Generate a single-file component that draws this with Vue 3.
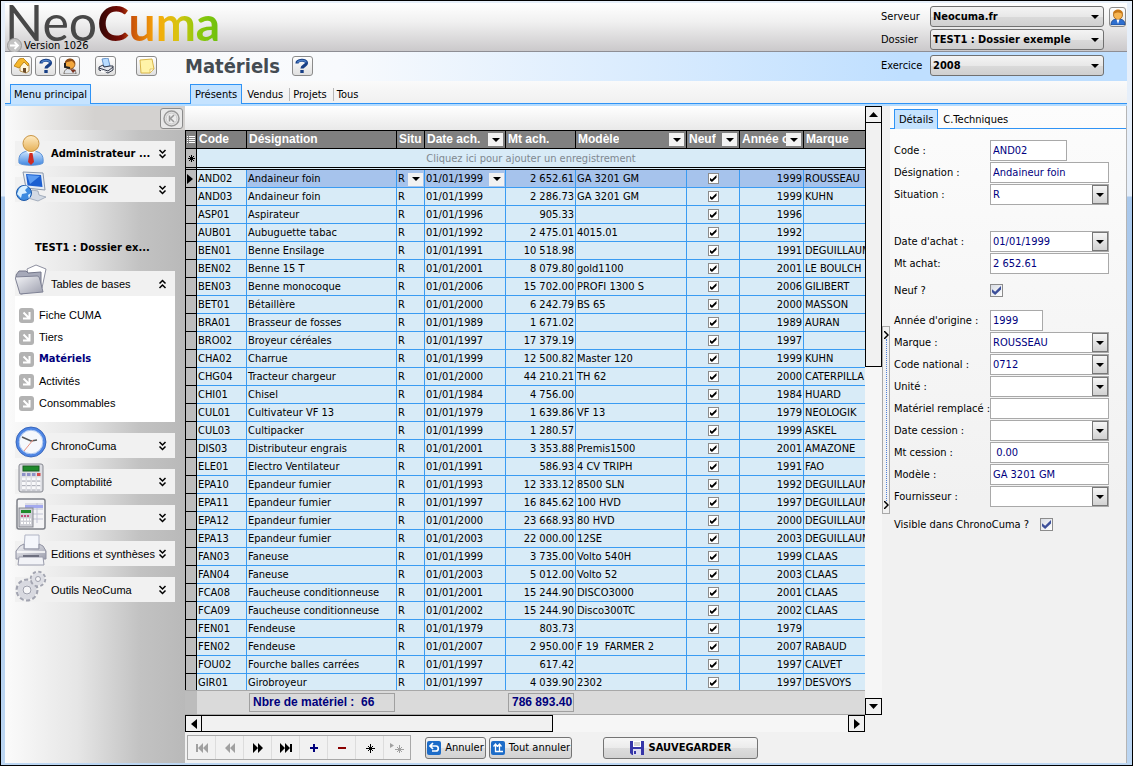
<template>
  <div class="window">
    <svg class="sprite" aria-hidden="true">
      <defs>
        <linearGradient id="blue" x1="0" y1="0" x2="0" y2="1">
          <stop offset="0" stop-color="#cfe6ff" />
          <stop offset="1" stop-color="#3f86e0" />
        </linearGradient>
        <linearGradient id="skin" x1="0" y1="0" x2="0" y2="1">
          <stop offset="0" stop-color="#ffecc4" />
          <stop offset="1" stop-color="#e6b056" />
        </linearGradient>
        <linearGradient id="steel" x1="0" y1="0" x2="1" y2="1">
          <stop offset="0" stop-color="#f4f5f8" />
          <stop offset="1" stop-color="#9c9ead" />
        </linearGradient>
      </defs>
      <symbol id="home" viewBox="0 0 16 16">
        <path d="M6 7v6l6 2 3-2V7l-4-4z" fill="#fff6dc" stroke="#a67a2c" stroke-width=".8" />
        <path d="M0 8l5-7 4-1 6 6-1 2-4-4-5 6z" fill="#f5b62c" stroke="#b27a10" stroke-width=".8" />
        <path d="M9 10h3v5l-3-1z" fill="#6a4a2a" />
      </symbol>
      <symbol id="help" viewBox="0 0 16 16">
        <path d="M3 5.500C3 1.500 12.500 1 12.500 5 12.500 8 8 7.500 8 10.500" fill="none" stroke="#173f86" stroke-width="3.200" />
        <path d="M3.500 4.500C4.500 2 11.500 1.500 12 4.500" fill="none" stroke="#4d80c8" stroke-width="1.500" />
        <rect x="6.300" y="12" width="3.400" height="3" fill="#173f86" />
      </symbol>
      <symbol id="support" viewBox="0 0 16 16">
        <path d="M2 16c0-4 3-6 6-6s6 2 6 6z" fill="#dfe4ea" stroke="#5a5148" stroke-width=".8" />
        <circle cx="8" cy="6" r="5" fill="#f2a73d" stroke="#8a4a10" stroke-width=".8" />
        <path d="M3 6C2-1 14-1 13 6l-3-3-5 1z" fill="#8a4a14" />
        <path d="M3 5v4l5 1" fill="none" stroke="#222" stroke-width="2" />
        <path d="M8 11l3 4 3-3z" fill="#7b3320" />
      </symbol>
      <symbol id="print" viewBox="0 0 16 16">
        <path d="M4 1l6-1 2 8-6 1z" fill="#b8dcff" stroke="#4d80c0" stroke-width=".8" />
        <path d="M1 9l4-2 1 2 6-1 3 0v4l-5 3-9-3z" fill="#e4e6ec" stroke="#333a4a" />
        <path d="M1 10l9 3 5-4" fill="none" stroke="#333a4a" />
        <path d="M3 12l6 2-2 1-4-1z" fill="#fff" />
      </symbol>
      <symbol id="note" viewBox="0 0 16 16">
        <path d="M1 2l12-1 2 10-4 4-9 0z" fill="#fff3a8" stroke="#d9b64a" />
        <path d="M11 15v-4h4z" fill="#fffbe0" stroke="#d9b64a" stroke-width=".7" />
      </symbol>
      <symbol id="account" viewBox="0 0 16 16">
        <path d="M1 16c0-5 3-6 7-6s7 1 7 6z" fill="#2e6fd0" stroke="#1b468c" stroke-width=".8" />
        <circle cx="8" cy="6" r="4.500" fill="#f7b552" stroke="#9a5a10" stroke-width=".8" />
        <path d="M3 5C3-1 13-1 13 5c-3-2-6-2-10 0z" fill="#c77818" />
        <path d="M6.500 10.500h3L8 15z" fill="#fff" />
      </symbol>
      <symbol id="user" viewBox="0 0 32 32">
        <path d="M4 29c-1-9 3-12 12-12s13 3 12 12c-3 3-21 3-24 0z" fill="url(#blue)" stroke="#5c93d8" />
        <path d="M11 17l5 5 5-5" fill="#fff" />
        <path d="M14.500 19h3l1.500 9-3 3-3-3z" fill="#cf2a22" />
        <circle cx="16" cy="9.500" r="8" fill="url(#skin)" stroke="#c99545" />
      </symbol>
      <symbol id="network" viewBox="0 0 32 32">
        <path d="M8 2l20 1 2 17-19-2z" fill="#e6ecf4" stroke="#8b98ab" />
        <path d="M11 4l15 1 1.500 12-15-1.500z" fill="#1c5fd0" />
        <path d="M12 5l13 1-10 8z" fill="#5c9cf2" />
        <path d="M17 20l6 1 1 4 7 2-8 4-10-3z" fill="#d3dae4" stroke="#8b98ab" stroke-width=".7" />
        <circle cx="9" cy="23" r="7.500" fill="#3c8be0" stroke="#1d58a8" />
        <path d="M4 19c3-4 7-4 9-2l-3 3 2 3-5 1-1 4-4-4zM13 25l3-2-2 6z" fill="#d9f0ff" />
      </symbol>
      <symbol id="folder" viewBox="0 0 32 32">
        <path d="M12 5l9-4 10 4-4 19-12-3z" fill="#fff" stroke="#8e90a0" />
        <path d="M1 11l3-4 7 0 2 2 13-1v18L6 30z" fill="#a6a9b9" stroke="#74778a" />
        <path d="M0 13l22-1c2 0 2 1 3 4l3 12-23 2z" fill="url(#steel)" stroke="#7f8295" />
      </symbol>
      <symbol id="clock" viewBox="0 0 32 32">
        <circle cx="16" cy="16" r="13.500" fill="#f6f8fc" stroke="#4f86e4" stroke-width="3" />
        <circle cx="16" cy="16" r="15" fill="none" stroke="#2a58b0" stroke-width=".8" />
        <circle cx="16" cy="16" r="11.800" fill="none" stroke="#a8c4f0" />
        <path d="M7 11l9 4 6-1" fill="none" stroke="#555" stroke-width="1.500" />
        <path d="M18 14L9 25" stroke="#e89080" />
      </symbol>
      <symbol id="calculator" viewBox="0 0 32 32">
        <rect x="4" y="2" width="24" height="28" rx="2" fill="#dcdde2" stroke="#85878f" />
        <rect x="8" y="4" width="16" height="5" fill="#1f8a2b" stroke="#1b5c22" />
        <g stroke-width="3" stroke-dasharray="3.500 1.500">
          <path d="M7 12.500h14" stroke="#8f92c8" />
          <path d="M22 12.500h4" stroke="#d84a4a" />
          <path d="M7 17h19M7 21.500h19M7 26h19" stroke="#f8f8fa" />
        </g>
        <path d="M7 19h18M7 23.500h18M7 28h18" stroke="#a6a8b2" stroke-width=".8" stroke-dasharray="3.500 1.500" />
      </symbol>
      <symbol id="invoice" viewBox="0 0 32 32">
        <rect x="2" y="1" width="28" height="30" rx="2" fill="#f4f4f6" stroke="#7e8088" stroke-width="1.500" />
        <path d="M10 6h18M10 11h18M10 16h18M10 21h18M22 5v20" stroke="#c2c4d4" fill="none" />
        <path d="M10 7h18v3H10z" fill="#a2a8ee" />
        <rect x="4" y="10" width="14" height="19" fill="#cfd0d6" stroke="#85878f" />
        <rect x="6" y="12" width="10" height="3" fill="#1f8a2b" />
        <path d="M6 18h8" stroke="#c04a7a" stroke-width="2" stroke-dasharray="2 1" />
        <path d="M6 21.500h10M6 25h10" stroke="#fff" stroke-width="2" stroke-dasharray="2 1" />
      </symbol>
      <symbol id="printer" viewBox="0 0 32 32">
        <path d="M10 1h14v14H9z" fill="#f4f6fb" stroke="#b0b4c4" />
        <path d="M5 12l4-2v5h15v-5l4 2 3 5v8H1v-8z" fill="url(#steel)" stroke="#9092a2" />
        <path d="M2 18h28" stroke="#fff" stroke-width="1.500" />
        <path d="M4 23h24l1 8H3z" fill="#f2f3f7" stroke="#9a9cac" />
        <path d="M8 22h16" stroke="#6e7080" stroke-width="2" />
      </symbol>
      <symbol id="gears" viewBox="0 0 32 32">
        <circle cx="12" cy="20" r="10" fill="none" stroke="#a2a4b0" stroke-width="3" stroke-dasharray="4 2.283" />
        <circle cx="12" cy="20" r="7" fill="#f2f2f5" stroke="#d8d9e0" stroke-width="5" />
        <circle cx="12" cy="20" r="4" fill="#f6f6f8" stroke="#9d9fab" />
        <circle cx="23" cy="9" r="7" fill="none" stroke="#a2a4b0" stroke-width="2.500" stroke-dasharray="3.200 2.300" />
        <circle cx="23" cy="9" r="4.500" fill="#f2f2f5" stroke="#dddee4" stroke-width="4" />
        <circle cx="23" cy="9" r="2.500" fill="#f6f6f8" stroke="#9d9fab" />
      </symbol>
      <symbol id="arrow" viewBox="0 0 15 15">
        <rect width="15" height="15" rx="3" fill="#b3b3b3" />
        <path d="M4.500 4.500l5 5M10.500 4v6.500H4" fill="none" stroke="#fff" stroke-width="2" />
      </symbol>
      <symbol id="undo" viewBox="0 0 14 14">
        <rect width="14" height="14" rx="2" fill="#1d6cc8" />
        <path d="M3 5h6c3 0 3 5 0 5H5M6 2L3 5l3 3" fill="none" stroke="#fff" stroke-width="1.700" />
      </symbol>
      <symbol id="undo-all" viewBox="0 0 14 14">
        <rect width="14" height="14" rx="2" fill="#1d6cc8" />
        <path d="M4.500 3v7.500H12M8.500 3v7M2.500 5.500L4.500 3l2 2.500M6.500 5.500l2-2.500 2 2.500" fill="none" stroke="#fff" stroke-width="1.300" />
      </symbol>
      <symbol id="save" viewBox="0 0 14 14">
        <path d="M0 0h14v14H2l-2-2z" fill="#3636a8" />
        <path d="M3 0h8v6H3z" fill="#fff" />
        <path d="M4 2h6M4 4h6" stroke="#aaa" />
        <path d="M3 8h8v6H3z" fill="#dcdcf0" />
        <path d="M4 10h2v3H4z" fill="#3636a8" />
      </symbol>
      <symbol id="chevrons" viewBox="0 0 9 10">
        <path d="M1.500 1l3 3 3-3M1.500 5.500l3 3 3-3" fill="none" stroke="#000" stroke-width="1.500" />
      </symbol>
      <symbol id="down" viewBox="0 0 8 4">
        <path d="M0 0h8L4 4z" />
      </symbol>
      <symbol id="first" viewBox="0 0 14 10">
        <path d="M1 1h2v8H1zM8 0v10L3 5zM13 0v10L8 5z" />
      </symbol>
      <symbol id="previous" viewBox="0 0 14 10">
        <path d="M7 0v10L2 5zM12 0v10L7 5z" />
      </symbol>
      <symbol id="next" viewBox="0 0 14 10">
        <path d="M2 0l5 5-5 5zM7 0l5 5-5 5z" />
      </symbol>
      <symbol id="last" viewBox="0 0 14 10">
        <path d="M1 0l5 5-5 5zM6 0l5 5-5 5zM11 1h2v8h-2z" />
      </symbol>
      <symbol id="plus" viewBox="0 0 14 10">
        <path d="M3 4h3V1h2v3h3v2H8v3H6V6H3z" />
      </symbol>
      <symbol id="minus" viewBox="0 0 14 10">
        <path d="M3 4h8v2H3z" />
      </symbol>
      <symbol id="star" viewBox="0 0 14 10">
        <path d="M7.500 1v9M3 5.500h9M5 3l5 5M10 3L5 8" fill="none" stroke="currentColor" />
      </symbol>
      <symbol id="insert" viewBox="0 0 14 10">
        <path d="M0 0l4 2.500L0 5z" />
        <path d="M9.500 2v8M5 6.500h9M7 4l5 5M12 4L7 9" fill="none" stroke="currentColor" />
      </symbol>
    </svg>

    <header class="banner">
      <div class="brand">
        <div class="logo"><span class="logo-neo">Neo</span><span class="logo-cuma">Cuma</span></div>
        <div class="version">
          <svg width="15" height="15" viewBox="0 0 15 15">
            <circle cx="7.500" cy="7.500" r="7" fill="#c4c4c4" stroke="#999" />
            <path d="M3 7.500h8M7.500 4l3.500 3.500L7.500 11" fill="none" stroke="#fff" stroke-width="1.800" />
          </svg>
          Version 1026
        </div>
      </div>
      <div class="connection">
        <label for="server">Serveur</label>
        <div class="combo big">
          <select id="server"><option>Neocuma.fr</option></select>
          <svg class="tri"><use href="#down" /></svg>
        </div>
        <button class="tool account" aria-label="Compte"><svg><use href="#account" /></svg></button>
        <label for="folder-select">Dossier</label>
        <div class="combo big">
          <select id="folder-select"><option>TEST1 : Dossier exemple</option></select>
          <svg class="tri"><use href="#down" /></svg>
        </div>
      </div>
    </header>

    <div class="toolbar">
      <div class="tools">
        <button v-for="tool in tools" :key="tool" class="tool" :class="tool" :aria-label="tool">
          <svg><use :href="'#' + tool" /></svg>
        </button>
      </div>
      <h1>Matériels</h1>
      <button class="tool" aria-label="Aide"><svg><use href="#help" /></svg></button>
      <div class="connection year">
        <label for="year">Exercice</label>
        <div class="combo big">
          <select id="year"><option>2008</option></select>
          <svg class="tri"><use href="#down" /></svg>
        </div>
      </div>
    </div>

    <nav class="tabs">
      <div class="tab-group side"><button class="tab active">Menu principal</button></div>
      <div class="tab-group">
        <button v-for="(tab, i) in tabs" :key="tab" class="tab" :class="{ active: i === 0 }">{{ tab }}</button>
      </div>
    </nav>

    <div class="body">
      <aside class="sidebar">
        <div class="side-top">
          <button class="collapse" aria-label="Réduire">
            <svg width="17" height="17" viewBox="0 0 17 17">
              <circle cx="8.500" cy="8.500" r="7.500" fill="#ececec" stroke="#999" stroke-width="1.500" />
              <circle cx="8.500" cy="8.500" r="5.500" fill="none" stroke="#c4c4c4" />
              <path d="M6.500 5.500v6M11 5L7.500 8.500 11 12" fill="none" stroke="#999" stroke-width="1.500" />
            </svg>
          </button>
        </div>
        <div class="menu">
          <template v-for="item in menu" :key="item.label">
            <div v-if="item.title" class="menu-title">{{ item.label }}</div>
            <button v-else class="menu-head" :class="{ bold: item.bold, open: item.children }">
              <svg class="menu-icon"><use :href="'#' + item.icon" /></svg>
              <span>{{ item.label }}</span>
              <svg class="chev"><use href="#chevrons" /></svg>
            </button>
            <ul v-if="item.children" class="submenu">
              <li v-for="child in item.children" :key="child">
                <svg><use href="#arrow" /></svg>
                <a href="#" :class="{ current: child === 'Matériels' }">{{ child }}</a>
              </li>
            </ul>
          </template>
        </div>
      </aside>

      <main class="main">
        <div class="grid-area">
          <div class="grid-column">
            <div class="group-strip"></div>
            <div class="table-wrap">
              <table>
                <colgroup>
                  <col v-for="(w, i) in widths" :key="i" :class="w" />
                </colgroup>
                <thead>
                  <tr>
                    <th class="mark">
                      <svg width="8" height="10" viewBox="0 0 8 10"><path d="M0 1.500h1M2 1.500h6M0 3.500h1M2 3.500h6M0 5.500h1M2 5.500h6M0 7.500h1M2 7.500h6" stroke="#fff" /></svg>
                    </th>
                    <th v-for="col in columns" :key="col.label">
                      <div class="th-inner">
                        <span>{{ col.label }}</span>
                        <button v-if="col.filter" class="drop" aria-label="Filtrer"><svg class="tri"><use href="#down" /></svg></button>
                      </div>
                    </th>
                  </tr>
                </thead>
                <tbody>
                  <tr class="new-row">
                    <td class="mark">
                      <svg width="7" height="7" viewBox="0 0 7 7"><path d="M3.500 0v7M1 1l5 5M6 1L1 6M0 3.500h7" stroke="#000" /></svg>
                    </td>
                    <td colspan="9">Cliquez ici pour ajouter un enregistrement</td>
                  </tr>
                  <tr v-for="(row, i) in rows" :key="row[0]" :class="{ selected: i === 0 }">
                    <td class="mark"><svg v-if="i === 0" width="6" height="10" viewBox="0 0 6 10"><path d="M0 0l6 5-6 5z" /></svg></td>
                    <td>{{ row[0] }}</td>
                    <td>{{ row[1] }}</td>
                    <td>
                      <div class="cell">R<button v-if="i === 0" class="drop" aria-label="Situation"><svg class="tri"><use href="#down" /></svg></button></div>
                    </td>
                    <td>
                      <div class="cell">{{ row[2] }}<button v-if="i === 0" class="drop" aria-label="Date"><svg class="tri"><use href="#down" /></svg></button></div>
                    </td>
                    <td class="num">{{ row[3] }}</td>
                    <td>{{ row[4] }}</td>
                    <td class="check-cell"><input type="checkbox" class="check" checked :aria-label="'Neuf ' + row[0]" /></td>
                    <td class="num">{{ row[5] }}</td>
                    <td>{{ row[6] }}</td>
                  </tr>
                </tbody>
              </table>
            </div>
            <div class="summary">
              <div class="total count">Nbre de matériel :&nbsp; 66</div>
              <div class="total amount">786 893.40</div>
            </div>
            <div class="hscroll">
              <button class="scroll-btn" aria-label="Gauche"><svg width="6" height="10" viewBox="0 0 6 10"><path d="M6 0v10L0 5z" /></svg></button>
              <div class="hthumb"></div>
              <div class="htrack"></div>
              <button class="scroll-btn" aria-label="Droite"><svg width="6" height="10" viewBox="0 0 6 10"><path d="M0 0v10l6-5z" /></svg></button>
            </div>
          </div>
          <div class="vscroll">
            <button class="scroll-btn" aria-label="Haut"><svg width="9" height="5" viewBox="0 0 9 5"><path d="M0 5h9L4.500 0z" /></svg></button>
            <div class="vthumb"></div>
            <div class="vtrack"></div>
            <button class="scroll-btn" aria-label="Bas"><svg width="9" height="5" viewBox="0 0 9 5"><path d="M0 0h9L4.500 5z" /></svg></button>
          </div>
        </div>
        <div class="actions">
          <div class="navigator">
            <button v-for="n in navigator" :key="n" :class="n" :aria-label="n"><svg><use :href="'#' + n" /></svg></button>
          </div>
          <button class="action"><svg><use href="#undo" /></svg>Annuler</button>
          <button class="action all"><svg><use href="#undo-all" /></svg>Tout annuler</button>
          <button class="action save"><svg><use href="#save" /></svg>SAUVEGARDER</button>
        </div>
      </main>

      <div class="splitter">
        <button aria-label="Replier">
          <svg width="5" height="8" viewBox="0 0 5 8"><path d="M0 0l4 4-4 4" /></svg>
          <i></i>
          <svg width="5" height="8" viewBox="0 0 5 8"><path d="M0 0l4 4-4 4" /></svg>
        </button>
      </div>

      <section class="details">
        <div class="tab-group details-tabs">
          <button class="tab active">Détails</button>
          <button class="tab">C.Techniques</button>
        </div>
        <form class="form" @submit.prevent>
          <div v-for="(group, g) in fields" :key="g" class="fieldset">
            <div v-for="f in group" :key="f.label" class="field" :class="{ long: f.long }">
              <label :for="f.id">{{ f.label }}</label>
              <input v-if="f.type === 'check'" :id="f.id" type="checkbox" class="check big" checked />
              <div v-else-if="f.type === 'select'" class="combo">
                <select :id="f.id"><option>{{ f.value }}</option></select>
                <span class="combo-btn"><svg class="tri"><use href="#down" /></svg></span>
              </div>
              <input v-else :id="f.id" type="text" :class="f.size" :value="f.value" />
            </div>
          </div>
        </form>
      </section>
    </div>
  </div>
</template>

<script setup>
const tools = ['home', 'help', 'support', 'print', 'note']
const tabs = ['Présents', 'Vendus', 'Projets', 'Tous']
const navigator = ['first', 'previous', 'next', 'last', 'plus', 'minus', 'star', 'insert']

const menu = [
  { label: 'Administrateur ...', icon: 'user', bold: true },
  { label: 'NEOLOGIK', icon: 'network', bold: true },
  { label: 'TEST1 : Dossier ex...', title: true },
  {
    label: 'Tables de bases',
    icon: 'folder',
    children: ['Fiche CUMA', 'Tiers', 'Matériels', 'Activités', 'Consommables']
  },
  { label: 'ChronoCuma', icon: 'clock' },
  { label: 'Comptabilité', icon: 'calculator' },
  { label: 'Facturation', icon: 'invoice' },
  { label: 'Editions et synthèses', icon: 'printer' },
  { label: 'Outils NeoCuma', icon: 'gears' }
]

const widths = ['w-mark', 'w-code', 'w-name', 'w-situ', 'w-date', 'w-amount', 'w-model', 'w-new', 'w-year', 'w-brand']

const columns = [
  { label: 'Code' },
  { label: 'Désignation' },
  { label: 'Situ' },
  { label: 'Date ach.', filter: true },
  { label: 'Mt ach.' },
  { label: 'Modèle', filter: true },
  { label: 'Neuf', filter: true },
  { label: 'Année o', filter: true },
  { label: 'Marque' }
]

const rows = [
  ['AND02', 'Andaineur foin', '01/01/1999', '2 652.61', 'GA 3201 GM', '1999', 'ROUSSEAU'],
  ['AND03', 'Andaineur foin', '01/01/1999', '2 286.73', 'GA 3201 GM', '1999', 'KUHN'],
  ['ASP01', 'Aspirateur', '01/01/1996', '905.33', '', '1996', ''],
  ['AUB01', 'Aubuguette tabac', '01/01/1992', '2 475.01', '4015.01', '1992', ''],
  ['BEN01', 'Benne Ensilage', '01/01/1991', '10 518.98', '', '1991', 'DEGUILLAUM'],
  ['BEN02', 'Benne 15 T', '01/01/2001', '8 079.80', 'gold1100', '2001', 'LE BOULCH'],
  ['BEN03', 'Benne monocoque', '01/01/2006', '15 702.00', 'PROFI 1300 S', '2006', 'GILIBERT'],
  ['BET01', 'Bétaillère', '01/01/2000', '6 242.79', 'BS 65', '2000', 'MASSON'],
  ['BRA01', 'Brasseur de fosses', '01/01/1989', '1 671.02', '', '1989', 'AURAN'],
  ['BRO02', 'Broyeur céréales', '01/01/1997', '17 379.19', '', '1997', ''],
  ['CHA02', 'Charrue', '01/01/1999', '12 500.82', 'Master 120', '1999', 'KUHN'],
  ['CHG04', 'Tracteur chargeur', '01/01/2000', '44 210.21', 'TH 62', '2000', 'CATERPILLA'],
  ['CHI01', 'Chisel', '01/01/1984', '4 756.00', '', '1984', 'HUARD'],
  ['CUL01', 'Cultivateur VF 13', '01/01/1979', '1 639.86', 'VF 13', '1979', 'NEOLOGIK'],
  ['CUL03', 'Cultipacker', '01/01/1999', '1 280.57', '', '1999', 'ASKEL'],
  ['DIS03', 'Distributeur engrais', '01/01/2001', '3 353.88', 'Premis1500', '2001', 'AMAZONE'],
  ['ELE01', 'Electro Ventilateur', '01/01/1991', '586.93', '4 CV TRIPH', '1991', 'FAO'],
  ['EPA10', 'Epandeur fumier', '01/01/1993', '12 333.12', '8500 SLN', '1992', 'DEGUILLAUM'],
  ['EPA11', 'Epandeur fumier', '01/01/1997', '16 845.62', '100 HVD', '1997', 'DEGUILLAUM'],
  ['EPA12', 'Epandeur fumier', '01/01/2000', '23 668.93', '80 HVD', '2000', 'DEGUILLAUM'],
  ['EPA13', 'Epandeur fumier', '01/01/2003', '22 000.00', '12SE', '2003', 'DEGUILLAUM'],
  ['FAN03', 'Faneuse', '01/01/1999', '3 735.00', 'Volto 540H', '1999', 'CLAAS'],
  ['FAN04', 'Faneuse', '01/01/2003', '5 012.00', 'Volto 52', '2003', 'CLAAS'],
  ['FCA08', 'Faucheuse conditionneuse', '01/01/2001', '15 244.90', 'DISCO3000', '2001', 'CLAAS'],
  ['FCA09', 'Faucheuse conditionneuse', '01/01/2002', '15 244.90', 'Disco300TC', '2002', 'CLAAS'],
  ['FEN01', 'Fendeuse', '01/01/1979', '803.73', '', '1979', ''],
  ['FEN02', 'Fendeuse', '01/01/2007', '2 950.00', 'F 19  FARMER 2', '2007', 'RABAUD'],
  ['FOU02', 'Fourche balles carrées', '01/01/1997', '617.42', '', '1997', 'CALVET'],
  ['GIR01', 'Girobroyeur', '01/01/1997', '4 039.90', '2302', '1997', 'DESVOYS']
]

const fields = [
  [
    { id: 'code', label: 'Code :', value: 'AND02', size: 'medium' },
    { id: 'name', label: 'Désignation :', value: 'Andaineur foin' },
    { id: 'status', label: 'Situation :', value: 'R', type: 'select' }
  ],
  [
    { id: 'bought', label: "Date d'achat :", value: '01/01/1999', type: 'select' },
    { id: 'price', label: 'Mt achat:', value: '2 652.61' }
  ],
  [{ id: 'is-new', label: 'Neuf ?', type: 'check' }],
  [
    { id: 'origin', label: "Année d'origine :", value: '1999', size: 'small' },
    { id: 'brand', label: 'Marque :', value: 'ROUSSEAU', type: 'select' },
    { id: 'national', label: 'Code national :', value: '0712', type: 'select' },
    { id: 'unit', label: 'Unité :', value: '', type: 'select' },
    { id: 'replaced', label: 'Matériel remplacé :', value: '' },
    { id: 'sold', label: 'Date cession :', value: '', type: 'select' },
    { id: 'sold-price', label: 'Mt cession :', value: ' 0.00' },
    { id: 'model', label: 'Modèle :', value: 'GA 3201 GM' },
    { id: 'supplier', label: 'Fournisseur :', value: '', type: 'select' }
  ],
  [{ id: 'visible', label: 'Visible dans ChronoCuma ?', type: 'check', long: true }]
]
</script>

<style>
body {
  margin: 0;
  background: #000;
}
</style>

<style scoped>
* {
  box-sizing: border-box;
}

.window {
  display: flex;
  flex-direction: column;
  height: 100vh;
  min-width: 1000px;
  overflow: hidden;
  border: 1px solid #000;
  padding: 2px 5px 2px 4px;
  background: linear-gradient(#e6effa 0, #e6effa 195px, #a9c8ec 196px, #bcd6f2 100%);
  font-family: 'DejaVu Sans Condensed', 'DejaVu Sans', sans-serif;
  font-size: 11px;
  line-height: 14px;
  color: #000;
}

.sprite {
  position: absolute;
  width: 0;
  height: 0;
}

button,
input,
select {
  font: inherit;
  color: inherit;
  margin: 0;
  padding: 0;
  border: 0;
  border-radius: 0;
  background: none;
}

button {
  display: flex;
  align-items: center;
  justify-content: center;
}

svg {
  flex: none;
}

.tri {
  width: 8px;
  height: 4px;
}

/* header */
.banner {
  display: flex;
  justify-content: space-between;
  height: 49px;
  flex: none;
  border-bottom: 1px solid #8e8e94;
  background: linear-gradient(#fff, #f0f0f0 40%, #cbc9cb);
}

.logo {
  height: 36px;
  font: 400 50px/38px Lato, sans-serif;
  white-space: nowrap;
}

.logo-neo {
  color: #484848;
}

.logo-cuma {
  font-size: 48px;
  font-weight: 700;
  color: transparent;
  background: linear-gradient(to right, #2a0606, #7c0d05 20%, #c8500a 28%, #f9a80a 48%, #d8c410 66%, #8cc80c 82%, #6cc00c);
  -webkit-background-clip: text;
  background-clip: text;
}

.version {
  display: flex;
  align-items: center;
  gap: 2px;
  height: 13px;
  padding-left: 2px;
}

.connection {
  display: grid;
  grid-template-columns: 49px 174px 22px;
  row-gap: 2px;
  align-content: start;
  align-items: center;
  padding: 3px 1px 0 0;
}

.tool.account {
  width: 17px;
  margin-left: 5px;
}

.combo {
  display: grid;
  grid-template-columns: 1fr auto;
  align-items: center;
}

.combo select {
  grid-area: 1 / 1 / 2 / 3;
  appearance: none;
  width: 100%;
  height: 21px;
  border: 1px solid #a9a9a9;
  padding: 0 20px 0 2px;
  background: #fff;
  color: #000080;
}

.combo .tri,
.combo-btn {
  grid-area: 1 / 2;
  pointer-events: none;
}

.combo.big select {
  height: 21px;
  border: 1px solid #707070;
  border-radius: 3px;
  background: linear-gradient(#f4f4f4, #e8e8e8 50%, #dadada 51%, #cfcfcf);
  color: #000;
  font-weight: 700;
}

.combo.big .tri {
  margin-right: 5px;
}

.combo-btn {
  display: flex;
  align-items: center;
  justify-content: center;
  width: 16px;
  height: 19px;
  margin-right: 1px;
  border: 1px solid #777;
  background: linear-gradient(#f6f6f6, #d2d2d2);
}

.toolbar {
  display: flex;
  align-items: center;
  height: 29px;
  flex: none;
  padding-bottom: 2px;
  background: linear-gradient(to right, #fbfbfb 0, #f8fafd 30%, #bfdfff 80%);
}

.tools {
  display: flex;
  gap: 3px;
  width: 180px;
  padding-left: 6px;
}

.tool {
  width: 21px;
  height: 20px;
  border: 1px solid #8b8b8b;
  border-radius: 3px;
  background: linear-gradient(#fff, #e0e0e0);
}

.tool svg {
  width: 16px;
  height: 16px;
}

.tool.print {
  margin-left: 12px;
}

.tool.note {
  margin-left: 17px;
}

h1 {
  margin: 0 12px 0 0;
  font-size: 20px;
  line-height: 26px;
  font-weight: 700;
  color: #444b52;
}

.year {
  margin-left: auto;
  padding-top: 0;
}

/* tabs */
.tabs {
  display: flex;
  height: 25px;
  flex: none;
  align-items: flex-end;
  border-bottom: 2px solid #b5dcff;
  background: linear-gradient(#fafafa, #f0f0f0);
}

.tab-group {
  display: flex;
  align-items: stretch;
  flex: 1;
  height: 20px;
  padding-left: 5px;
  border-bottom: 1px solid #2f93f5;
}

.tab-group.side {
  flex: 0 0 180px;
}

.tab {
  height: 20px;
  padding: 0 4px;
  border: solid transparent;
  border-width: 1px 1px 0;
  white-space: nowrap;
}

.side .tab {
  padding: 0 3px;
}

.tab.active {
  border-color: #2f93f5;
  background: #c5e3ff;
}

.tab + .tab + .tab {
  background: linear-gradient(#b8b8b8, #b8b8b8) 0 3px / 1px 13px no-repeat;
}

.body {
  display: flex;
  flex: 1;
  min-height: 0;
  background: #f1f1f1;
}

/* side menu */
.sidebar {
  width: 180px;
  flex: none;
  background: linear-gradient(to right, #fbfbfb 0, #e6e6e6 40%, #c2c2c2 75%, #b9b9b9);
}

.side-top {
  display: flex;
  justify-content: flex-end;
  height: 24px;
  padding: 2px 2px 0;
  background: linear-gradient(to right, #fafafa, #d4d2d0 50%, #d4d2d0);
}

.collapse {
  width: 23px;
  height: 21px;
  border: 1px solid #8b8b8b;
  border-radius: 3px;
  background: #e8e8e8;
}

.menu {
  display: flex;
  flex-direction: column;
  gap: 11px;
  padding: 11px 10px 0;
}

.menu-head {
  justify-content: flex-start;
  height: 25px;
  padding-right: 8px;
  background: #f1f1f1;
  font-family: 'Liberation Sans', sans-serif;
}

.menu-head.bold {
  font-family: inherit;
  font-weight: 700;
}

.menu-head span {
  flex: 1;
  text-align: left;
  white-space: nowrap;
}

.menu-icon {
  width: 32px;
  height: 32px;
  margin: -8px 4px 0 0;
}

.chev {
  width: 9px;
  height: 10px;
}

.open .chev {
  transform: rotate(180deg);
}

.menu-title {
  height: 25px;
  margin-top: 22px;
  padding-left: 20px;
  line-height: 25px;
  font-weight: 700;
}

.submenu {
  margin: -11px 0 0;
  padding: 8px 4px;
  list-style: none;
  background: #fff;
  font-family: 'Liberation Sans', sans-serif;
}

.submenu li {
  display: flex;
  align-items: center;
  gap: 5px;
  height: 22px;
}

.submenu svg {
  width: 15px;
  height: 15px;
}

.submenu a {
  color: #000;
  text-decoration: none;
}

.submenu .current {
  font-family: 'DejaVu Sans Condensed', sans-serif;
  font-weight: 700;
  color: #00007c;
}

/* data grid */
.main {
  display: flex;
  flex-direction: column;
  flex: 1;
  min-width: 0;
}

.grid-area {
  display: flex;
  flex: 1;
  min-height: 0;
}

.grid-column {
  display: flex;
  flex-direction: column;
  flex: 1;
  min-width: 0;
}

.group-strip {
  height: 24px;
  flex: none;
  background: linear-gradient(#fff, #e9e9e9);
}

.table-wrap {
  flex: 1;
  min-height: 0;
  overflow: hidden;
  background: #d8ebf7;
}

table {
  width: 100%;
  table-layout: fixed;
  border-collapse: separate;
  border-spacing: 0;
}

.w-mark {
  width: 12px;
}

.w-code {
  width: 50px;
}

.w-name {
  width: 150px;
}

.w-situ {
  width: 28px;
}

.w-date {
  width: 81px;
}

.w-amount {
  width: 70px;
}

.w-model {
  width: 111px;
}

.w-new {
  width: 53px;
}

.w-year {
  width: 64px;
}

th {
  height: 19px;
  padding: 0 1px 0 2px;
  border: solid #000;
  border-width: 1px 1px 1px 0;
  background: #808080;
  color: #fff;
  font: 700 12px/17px 'Liberation Sans', sans-serif;
  text-align: left;
}

.th-inner,
.cell {
  display: flex;
  align-items: center;
  justify-content: space-between;
}

.th-inner span {
  min-width: 0;
  overflow: hidden;
  white-space: nowrap;
}

.drop {
  width: 15px;
  height: 13px;
  flex: none;
  margin-right: 1px;
  background: #f2f2f2;
  color: #000;
}

.cell .drop {
  margin-right: 0;
}

td {
  height: 18px;
  padding: 1px 1px 0;
  border: solid #3a9bf2;
  border-width: 0 1px 1px 0;
  background: #d8ebf7;
  line-height: 16px;
  white-space: pre;
  overflow: hidden;
}

th:last-child,
td:last-child {
  border-right: 0;
}

.mark,
th.mark {
  padding: 0 0 0 1px;
  border-left: 1px solid #000;
  border-color: #000;
  background: #bdbdbd;
  line-height: 0;
}

th.mark {
  background: #808080;
}

.new-row td {
  height: 21px;
  border-bottom: 3px double #000;
  color: #808890;
  text-align: center;
}

.selected td:nth-child(n + 3) {
  background: #a6c3ec;
}

.num {
  text-align: right;
}

.check-cell {
  padding-top: 0;
  line-height: 0;
  text-align: center;
}

.check {
  appearance: none;
  display: inline-grid;
  place-content: center;
  width: 11px;
  height: 11px;
  border: 1px solid #8c8c8c;
  background: #fff;
  vertical-align: middle;
}

.check:checked::before {
  content: '';
  width: 7px;
  height: 7px;
  background: #000;
  clip-path: polygon(0 35%, 35% 65%, 100% 0, 100% 38%, 35% 100%, 0 70%);
}

.check.big {
  width: 13px;
  height: 13px;
  background: linear-gradient(135deg, #d8dce4, #fff);
}

.check.big:checked::before {
  width: 9px;
  height: 9px;
  background: #3c4f9a;
}

.summary {
  display: flex;
  align-items: center;
  height: 25px;
  flex: none;
  padding-left: 52px;
  border: solid #a8a8a8;
  border-width: 1px 0;
  background: linear-gradient(to right, #bcbcbc 12px, #dadada 12px);
}

.total {
  height: 19px;
  margin-left: 12px;
  padding: 0 3px;
  border: 1px solid #a0a0a0;
  overflow: hidden;
  color: #00007c;
  font: 700 12px/17px 'Liberation Sans', sans-serif;
  white-space: nowrap;
}

.count {
  width: 146px;
}

.amount {
  width: 66px;
  margin-left: 113px;
}

.hscroll,
.vscroll {
  display: flex;
  flex: none;
}

.hscroll {
  height: 17px;
}

.scroll-btn {
  width: 17px;
  height: 17px;
  flex: none;
  border: 1px solid #000;
  background: #f1f1f1;
}

.hthumb {
  flex: 351;
  margin-left: -1px;
  border: 1px solid #000;
  background: #f1f1f1;
}

.htrack {
  flex: 295;
  background: #f6f6f6;
}

.vscroll {
  flex-direction: column;
  width: 17px;
  padding-bottom: 17px;
}

.vthumb {
  flex: 243;
  margin-top: -1px;
  border: 1px solid #000;
  background: #f1f1f1;
}

.vtrack {
  flex: 332;
  background: #f6f6f6;
}

/* bottom buttons */
.actions {
  display: flex;
  align-items: center;
  height: 31px;
  flex: none;
  padding-left: 2px;
}

.navigator {
  display: flex;
  height: 25px;
  margin-right: 14px;
  border: 1px solid #a8a8a8;
}

.navigator button {
  width: 28px;
  border-right: 1px solid #dcdcdc;
}

.navigator button:last-child {
  border-right: 0;
  width: 26px;
}

.navigator svg {
  width: 14px;
  height: 10px;
}

.navigator .first,
.navigator .previous,
.navigator .insert {
  color: #a0a0a0;
  fill: #a0a0a0;
}

.navigator .plus {
  fill: #00007c;
}

.navigator .minus {
  fill: #8a0000;
}

.action {
  gap: 4px;
  width: 61px;
  height: 22px;
  margin-right: 3px;
  border: 1px solid #747474;
  border-radius: 3px;
  background: linear-gradient(#f6f6f6, #ebebeb 50%, #dddddd 51%, #d2d2d2);
  white-space: nowrap;
}

.action svg {
  width: 14px;
  height: 14px;
}

.action.all {
  width: 83px;
}

.action.save {
  gap: 5px;
  width: 155px;
  margin-left: 28px;
  font-weight: 700;
}

.splitter {
  display: flex;
  align-items: center;
  width: 8px;
  flex: none;
}

.splitter button {
  flex-direction: column;
  width: 8px;
  height: 188px;
  margin-bottom: 30px;
  padding: 4px 0;
  border: 1px solid #a8a8a8;
}

.splitter path {
  fill: none;
  stroke: #000;
  stroke-width: 1.5px;
}

.splitter i {
  flex: 1;
  border-left: 1px dotted #4f7fd8;
}

/* details panel */
.details {
  width: 237px;
  flex: none;
  border-right: 1px solid #b5b5b5;
  background: linear-gradient(#fcfcfc, #f1f1f1 60%);
}

.details-tabs {
  margin-top: 3px;
  padding-left: 4px;
}

.form {
  padding: 11px 0 0 4px;
}

.fieldset {
  display: grid;
  gap: 1px;
}

.fieldset:nth-child(2) {
  margin-top: 26px;
}

.fieldset:nth-child(3) {
  margin-top: 6px;
}

.fieldset:nth-child(4) {
  margin-top: 9px;
}

.fieldset:nth-child(5) {
  margin-top: 7px;
}

.field {
  display: grid;
  grid-template-columns: 96px 119px;
  align-items: center;
  height: 21px;
}

.field.long {
  grid-template-columns: 146px auto;
}

.field label {
  white-space: nowrap;
}

.field input[type='text'] {
  width: 100%;
  height: 21px;
  padding: 0 2px;
  border: 1px solid #a9a9a9;
  background: #fff;
  color: #000080;
}

.field input.medium {
  width: 77px;
}

.field input.small {
  width: 53px;
}
</style>
